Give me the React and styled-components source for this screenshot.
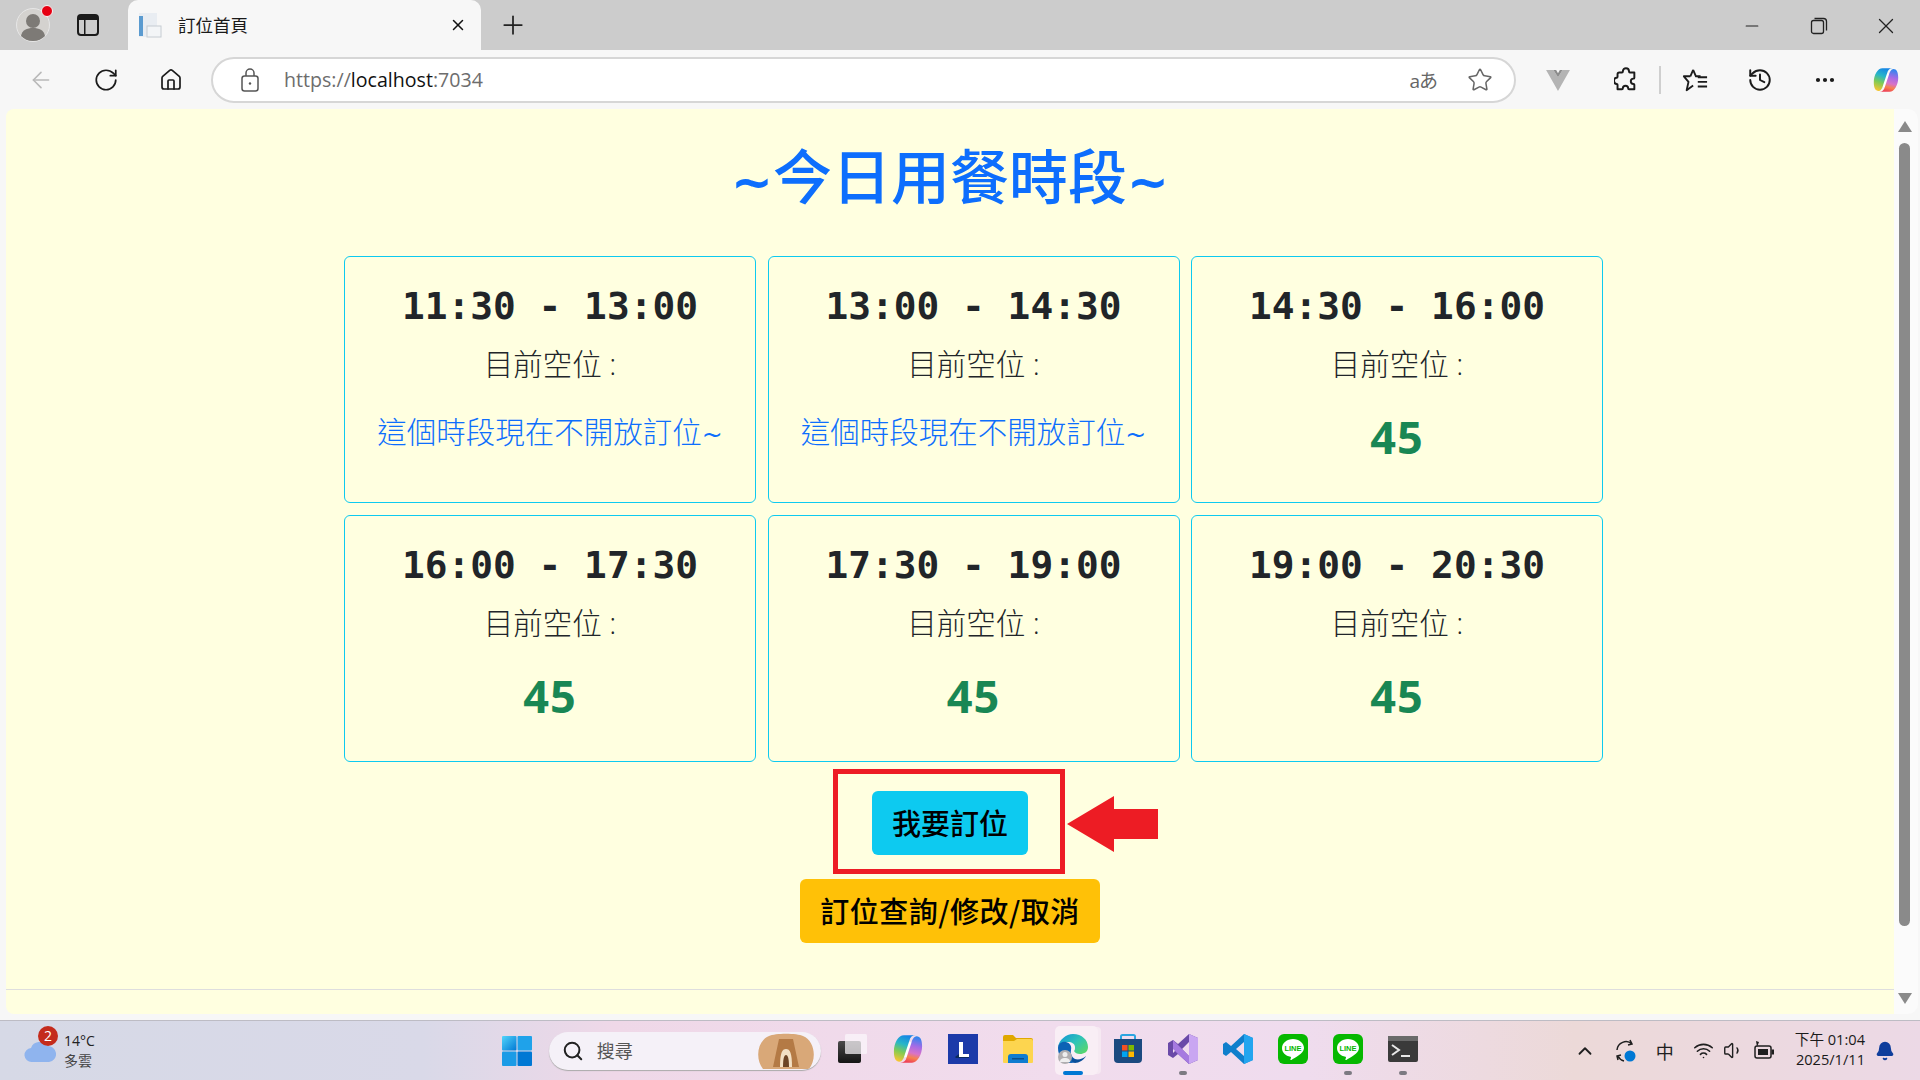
import React from 'react';
import styled, { createGlobalStyle } from 'styled-components';
import {
  ArrowLeft, RotateCw, Home, Star, MoreHorizontal, History, X, Plus, Minus,
  Search, ChevronUp, Wifi, Volume1, Bell,
} from 'lucide-react';

const GlobalStyle = createGlobalStyle`
html, body {
  margin: 0;
  padding: 0;
  width: 1920px;
  height: 1080px;
  overflow: hidden;
  font-family: "Open Sans", "Noto Sans CJK TC", sans-serif;
}
`;

const Screen = styled.div`
  width: 1920px;
  height: 1080px;
  display: flex;
  flex-direction: column;
  background: #f7f7f7;
`;

/* ---- browser chrome ---- */
const TabStrip = styled.div`
  height: 50px;
  background: #cccccc;
  display: flex;
  align-items: center;
  flex-shrink: 0;
`;
const Avatar = styled.div`
  position: relative;
  width: 34px;
  height: 34px;
  margin-left: 16px;
  flex-shrink: 0;
`;
const RedDot = styled.span`
  position: absolute;
  top: -3px;
  right: -3px;
  width: 10px;
  height: 10px;
  border-radius: 50%;
  background: #e60012;
  border: 1.5px solid #f5f5f5;
`;
const TabsButton = styled.div`
  width: 22px;
  height: 22px;
  margin-left: 27px;
  flex-shrink: 0;
`;
const Tab = styled.div`
  width: 353px;
  height: 50px;
  margin-left: 29px;
  padding: 0 14px 0 10px;
  box-sizing: border-box;
  display: flex;
  align-items: center;
  background: #f7f7f7;
  border-radius: 10px 10px 0 0;
`;
const TabTitle = styled.span`
  flex: 1;
  margin-left: 16px;
  padding-bottom: 2px;
  font-size: 17.5px;
  color: #1a1a1a;
`;
const NewTab = styled.div`
  margin-left: 17px;
  display: flex;
  color: #222;
`;
const WindowButtons = styled.div`
  margin-left: auto;
  display: flex;
  align-items: center;
  padding-right: 1px;
  padding-top: 2px;
  color: #222;
`;
const WindowSlot = styled.div`
  width: 67px;
  display: flex;
  justify-content: center;
`;

const Toolbar = styled.div`
  height: 59px;
  background: #f7f7f7;
  display: flex;
  align-items: center;
  flex-shrink: 0;
`;
const ToolIcon = styled.div`
  width: ${p => p.$w || 26}px;
  margin-left: ${p => p.$ml || 0}px;
  display: flex;
  justify-content: center;
  align-items: center;
  color: ${p => p.$color || '#1b1b1b'};
  flex-shrink: 0;
`;
const AddressBar = styled.div`
  width: 1305px;
  height: 46px;
  margin-left: 27px;
  box-sizing: border-box;
  border: 2px solid #d6d6d6;
  border-radius: 23px;
  background: #fff;
  display: flex;
  align-items: center;
  flex-shrink: 0;
`;
const UrlText = styled.span`
  margin-left: 22px;
  font-size: 19.6px;
  color: #6d6d6d;
  b {
    font-weight: 400;
    color: #111;
  }
`;
const Translate = styled.span`
  margin-left: auto;
  font-size: 19px;
  color: #666;
  letter-spacing: -1px;
`;
const Divider = styled.span`
  width: 2px;
  height: 28px;
  margin-left: 21px;
  background: #cfcfcf;
  flex-shrink: 0;
`;

/* ---- page ---- */
const Body = styled.div`
  flex: 1;
  display: flex;
  min-height: 0;
  padding: 0 2px 6px 6px;
`;
const Viewport = styled.div`
  flex: 1;
  background: #ffffe0;
  border-radius: 8px 0 0 8px;
  display: flex;
  flex-direction: column;
  align-items: center;
  min-width: 0;
`;
const Title = styled.h1`
  margin: 27px 0 0;
  height: 120px;
  font-size: 59px;
  line-height: 76px;
  font-weight: 500;
  color: #0d6efd;
  font-family: "Noto Sans CJK TC", sans-serif;
`;
const Tilde = styled.span`
  font-family: "DejaVu Sans", sans-serif;
  font-weight: ${p => p.$bold ? 700 : 400};
  font-size: ${p => p.$size}px;
`;
const SlotGrid = styled.div`
  align-self: flex-start;
  margin-left: 338px;
  width: 1259px;
  display: grid;
  grid-template-columns: repeat(3, 412px);
  grid-auto-rows: 247px;
  gap: 12px 11.5px;
`;
const SlotCard = styled.div`
  box-sizing: border-box;
  border: 1px solid #0dcaf0;
  border-radius: 6px;
  display: flex;
  flex-direction: column;
  align-items: center;
`;
const SlotTime = styled.div`
  margin-top: 25px;
  height: 48px;
  line-height: 48px;
  font-family: "DejaVu Sans Mono", monospace;
  font-weight: 700;
  font-size: 37.8px;
  color: #212529;
`;
const SlotLabel = styled.div`
  margin-top: 10px;
  height: 48px;
  line-height: 48px;
  font-size: 29.5px;
  font-weight: 300;
  color: #212529;
`;
const Closed = styled.div`
  margin-top: 20px;
  height: 48px;
  line-height: 48px;
  font-size: 29.5px;
  font-weight: 300;
  color: #0d6efd;
`;
const Seats = styled.div`
  margin-top: 25px;
  height: 48px;
  line-height: 48px;
  font-size: 45px;
  font-weight: 700;
  letter-spacing: 1px;
  color: #198754;
`;
const Actions = styled.div`
  position: relative;
  margin-top: 29px;
  display: flex;
  flex-direction: column;
  align-items: center;
  gap: 24px;
`;
const ActionButton = styled.button`
  height: 64px;
  padding: 0 20px 3px;
  border: none;
  border-radius: 6px;
  background: ${p => p.$bg};
  color: #000;
  font-size: 29px;
  font-weight: 500;
  letter-spacing: ${p => p.$spread ? '0.5px' : '0'};
  font-family: "Noto Sans CJK TC", sans-serif;
`;
const RedFrame = styled.div`
  position: absolute;
  top: -22px;
  left: 33px;
  width: 232px;
  height: 105px;
  box-sizing: border-box;
  border: 5px solid #ed1c24;
`;
const RedArrow = styled.svg`
  position: absolute;
  top: 5px;
  left: 267px;
`;
const HRule = styled.div`
  align-self: stretch;
  height: 1px;
  margin-top: 46px;
  background: #dedede;
`;
const ScrollTrack = styled.div`
  width: 24px;
  background: #fbfbfb;
  border-radius: 0 10px 10px 0;
  display: flex;
  flex-direction: column;
  align-items: center;
  padding: 12px 3px 10px 0;
  box-sizing: border-box;
`;
const ScrollArrow = styled.div`
  width: 0;
  height: 0;
  border-left: 7px solid transparent;
  border-right: 7px solid transparent;
  ${p => p.$down ? 'border-top: 11px solid #8a8a8a;' : 'border-bottom: 11px solid #8a8a8a;'}
`;
const ScrollThumb = styled.div`
  width: 11px;
  height: 783px;
  margin-top: 11px;
  background: #8a8a8a;
  border-radius: 6px;
  margin-bottom: auto;
`;

/* ---- taskbar ---- */
const Taskbar = styled.div`
  height: 60px;
  flex-shrink: 0;
  box-sizing: border-box;
  border-top: 1px solid #bdbcc4;
  background: linear-gradient(90deg, #d6d9e6 0%, #d9d9e8 22%, #efd8e8 32%, #f1dced 55%, #efdcee 68%, #ecd9d8 82%, #ecd9e6 100%);
  display: flex;
  align-items: center;
  position: relative;
`;
const Weather = styled.div`
  position: relative;
  width: 30px;
  height: 24px;
  margin-left: 24px;
  flex-shrink: 0;
`;
const Badge = styled.span`
  position: absolute;
  top: -13px;
  left: 14px;
  width: 20px;
  height: 20px;
  border-radius: 50%;
  background: #c42b1c;
  color: #fff;
  font-size: 14px;
  line-height: 20px;
  text-align: center;
`;
const WeatherText = styled.div`
  margin-left: 10px;
  font-size: 14px;
  line-height: 20px;
  color: #222;
  flex-shrink: 0;
  span {
    display: block;
    color: #444;
  }
`;
const StartIcon = styled.div`
  margin-left: 407px;
  width: 30px;
  height: 30px;
  flex-shrink: 0;
`;
const SearchBox = styled.div`
  width: 272px;
  height: 38px;
  margin-left: 17px;
  box-sizing: border-box;
  background: #f5f1f8;
  border-radius: 19px;
  box-shadow: 0 1px 1px #aaa;
  display: flex;
  align-items: center;
  padding-left: 13px;
  color: #555;
  font-size: 18px;
  flex-shrink: 0;
  position: relative;
  overflow: hidden;
`;
const SearchLabel = styled.span`
  margin-left: 13px;
  padding-bottom: 2px;
`;
const SearchArt = styled.svg`
  position: absolute;
  right: 4px;
  top: 1px;
`;
const AppRow = styled.div`
  display: flex;
  margin-left: 5px;
  flex-shrink: 0;
`;
const AppSlot = styled.div`
  position: relative;
  width: 55px;
  height: 50px;
  display: flex;
  align-items: center;
  justify-content: center;
  ${p => p.$active && `
    &::before {
      content: '';
      position: absolute;
      left: 9px;
      top: 0;
      width: 43px;
      height: 49px;
      background: #f9eef5;
      border-radius: 5px;
      box-shadow: 4px 0 0 -1px #f6e9f2;
    }
  `}
`;
const AppIcon = styled.div`
  position: relative;
  width: 30px;
  height: 30px;
  margin-top: -4px;
`;
const RunDot = styled.span`
  position: absolute;
  bottom: 1px;
  left: 50%;
  transform: translateX(-50%);
  width: ${p => p.$on ? 20 : 8}px;
  height: 4px;
  border-radius: 2px;
  background: ${p => p.$on ? '#0078d4' : '#7c7a82'};
`;
const Tray = styled.div`
  margin-left: auto;
  display: flex;
  align-items: center;
  color: #1f1f1f;
  flex-shrink: 0;
  padding-right: 20px;
`;
const TrayItem = styled.div`
  width: ${p => p.$w || 30}px;
  margin-left: ${p => p.$ml || 0}px;
  display: flex;
  justify-content: center;
  font-size: 18px;
`;
const Clock = styled.div`
  margin-left: 16px;
  padding-bottom: 4px;
  text-align: right;
  font-size: 14.6px;
  line-height: 20px;
  color: #1a1a1a;
  white-space: nowrap;
`;

const CopilotIcon = ({ size = 30, id }) => (
  <svg width={size} height={size} viewBox="0 0 33 32">
    <defs>
      <linearGradient id={`${id}A`} x1="0.6" y1="0" x2="0.3" y2="1">
        <stop offset="0" stopColor="#1584e6" />
        <stop offset="0.35" stopColor="#27b6c8" />
        <stop offset="0.65" stopColor="#7fcb55" />
        <stop offset="1" stopColor="#f6c532" />
      </linearGradient>
      <linearGradient id={`${id}B`} x1="0.6" y1="0" x2="0.4" y2="1">
        <stop offset="0" stopColor="#2f86ee" />
        <stop offset="0.35" stopColor="#a56be6" />
        <stop offset="0.62" stopColor="#d873c8" />
        <stop offset="0.8" stopColor="#f7824e" />
        <stop offset="1" stopColor="#ee3f56" />
      </linearGradient>
    </defs>
    <path d="M17 8h6l-6 17h-6z" fill="#fff" />
    <path d="M12 1h13c-4 0-6 2-7 6l-5 15c-1 4-3 8-6 8-4 0-6-4-6-11C1 9 6 1 12 1z" fill={`url(#${id}A)`} />
    <path d="M21 31H8c4 0 6-2 7-6l5-15c1-4 3-8 6-8 4 0 6 4 6 11 0 9-5 18-11 18z" fill={`url(#${id}B)`} />
  </svg>
);

const LineIcon = () => (
  <svg width="30" height="30" viewBox="0 0 30 30">
    <rect width="30" height="30" rx="6" fill="#06b800" />
    <path d="M15 5c-6 0-11 4-11 9 0 4.500 3.500 8 8.500 8.800.8.200.6 1-.1 2.700-.2.600.3.800 1 .4 3-1.800 12.600-6.500 12.600-11.900 0-5-5-9-11-9z" fill="#fff" />
    <text x="15" y="17" textAnchor="middle" fontSize="7.500" fontWeight="700" fill="#06b800" fontFamily="Liberation Sans, sans-serif">LINE</text>
  </svg>
);

const slots = [
  { time: '11:30 - 13:00', closed: true },
  { time: '13:00 - 14:30', closed: true },
  { time: '14:30 - 16:00', seats: 45 },
  { time: '16:00 - 17:30', seats: 45 },
  { time: '17:30 - 19:00', seats: 45 },
  { time: '19:00 - 20:30', seats: 45 },
];

const apps = [
  {
    key: 'taskview',
    icon: (
      <svg width="30" height="30" viewBox="0 0 30 30">
        <defs>
          <linearGradient id="tvA" x1="0" y1="0" x2="0" y2="1">
            <stop offset="0" stopColor="#4a4a4a" />
            <stop offset="1" stopColor="#141414" />
          </linearGradient>
        </defs>
        <rect x="0" y="7" width="23" height="22" rx="2" fill="url(#tvA)" />
        <rect x="7" y="0" width="22" height="20" rx="1.500" fill="#fbf7fb" fillOpacity="0.72" />
      </svg>
    ),
  },
  { key: 'copilot', icon: <CopilotIcon id="cpBar" /> },
  {
    key: 'l',
    icon: (
      <svg width="30" height="30" viewBox="0 0 30 30">
        <rect width="30" height="30" fill="#1c3aa9" />
        <path d="M7 23l4-3V9h4v11h6v4H8z" fill="#0b2a5c" />
        <path d="M11 8h4v12h6v3H11z" fill="#fff" />
      </svg>
    ),
  },
  {
    key: 'folder',
    icon: (
      <svg width="30" height="30" viewBox="0 0 30 30">
        <path d="M0 3a2 2 0 0 1 2-2h8l3 3h15a2 2 0 0 1 2 2v4H0z" fill="#e0a800" />
        <path d="M0 7h11l3-2h14a2 2 0 0 1 2 2v21a1 1 0 0 1-1 1H1a1 1 0 0 1-1-1z" fill="#fdd54f" />
        <path d="M5 29v-6a3 3 0 0 1 3-3h14a3 3 0 0 1 3 3v6z" fill="#0f7cd0" />
        <rect x="9" y="24" width="12" height="1.500" fill="#0a4f8c" />
      </svg>
    ),
  },
  {
    key: 'edge',
    active: true,
    running: 'on',
    icon: (
      <svg width="30" height="30" viewBox="0 0 30 30">
        <defs>
          <linearGradient id="edgeA" x1="0" y1="0" x2="1" y2="0.8">
            <stop offset="0" stopColor="#0f8fd8" />
            <stop offset="0.55" stopColor="#2fc4b8" />
            <stop offset="1" stopColor="#58d66c" />
          </linearGradient>
        </defs>
        <path d="M0 13C1 6 8 0 15 0c9 0 15 6 15 13 0 5-4 7-8 7-3 0-5-1-6-3 1-1 1-2 1-4 0-3-3-5-7-5-4 0-9 2-10 5z" fill="url(#edgeA)" />
        <path d="M0 14c0-4 4-7 8-6 4 1 6 4 5 8-1 5 2 9 7 10-2 2-4 3-7 3C5 29 0 22 0 14z" fill="#0c62b5" />
        <path d="M13 23c4 4 11 3 15-1-2 4-7 7-11 7-2 0-4-3-4-6z" fill="#0a4f9a" />
        <circle cx="7" cy="23" r="7" fill="#b0aeb0" />
        <circle cx="7" cy="20.500" r="2.500" fill="#eeeeee" />
        <path d="M2 28c0-3 2-4 5-4s5 1 5 4z" fill="#eeeeee" />
      </svg>
    ),
  },
  {
    key: 'store',
    icon: (
      <svg width="30" height="30" viewBox="0 0 30 30">
        <path d="M8 6V2.500a1.500 1.500 0 0 1 1.500-1.500h11a1.500 1.500 0 0 1 1.500 1.500V6" fill="none" stroke="#2ba4e0" strokeWidth="2" />
        <path d="M1 5h28v20a4 4 0 0 1-4 4H5a4 4 0 0 1-4-4z" fill="#1b4a80" />
        <rect x="9" y="11" width="5.500" height="5.500" fill="#f25022" />
        <rect x="15.500" y="11" width="5.500" height="5.500" fill="#7fba00" />
        <rect x="9" y="17.500" width="5.500" height="5.500" fill="#00a4ef" />
        <rect x="15.500" y="17.500" width="5.500" height="5.500" fill="#ffb900" />
      </svg>
    ),
  },
  {
    key: 'vs',
    running: 'dot',
    icon: (
      <svg width="30" height="30" viewBox="0 0 30 30">
        <path fillRule="evenodd" d="M21 0L10 10 5 6 0 9v12l5 3 5-4 11 10 9-4V4zM5 11l4 4-4 4zM21 8v14l-7-7z" fill="#6a4aa8" />
        <path d="M5 6l16 16v8L10 20 5 15z" fill="#a67ae0" />
        <path d="M21 0l9 4v22l-9 4v-8l0-14z" fill="#c9a6f2" />
      </svg>
    ),
  },
  {
    key: 'vscode',
    icon: (
      <svg width="30" height="30" viewBox="0 0 30 30">
        <path fillRule="evenodd" d="M21 0L8 12 3 8 0 10v10l3 2 5-4 13 12 9-4V4zM21 8v14l-8-7z" fill="#0f7fcc" />
        <path d="M21 0l9 4v22l-9 4v-8l0-14z" fill="#23a5ef" />
      </svg>
    ),
  },
  { key: 'line1', icon: <LineIcon /> },
  { key: 'line2', running: 'dot', icon: <LineIcon /> },
  {
    key: 'terminal',
    running: 'dot',
    icon: (
      <svg width="30" height="30" viewBox="0 0 30 30">
        <rect y="2" width="30" height="26" rx="2" fill="#3a3a3a" />
        <rect y="2" width="30" height="5" fill="#6a6a6a" />
        <path d="M4 11l7 5-7 5" fill="none" stroke="#e8e8e8" strokeWidth="2" />
        <rect x="13" y="21" width="9" height="2" fill="#e8e8e8" />
      </svg>
    ),
  },
];

const App = () => (
  <Screen>
    <GlobalStyle />
    <TabStrip>
      <Avatar>
        <svg width="34" height="34" viewBox="0 0 34 34">
          <circle cx="17" cy="17" r="16.500" fill="#d4d2cf" stroke="#e6e6e6" />
          <circle cx="17" cy="13" r="7" fill="#7d7a76" />
          <path d="M5 28c1-6 6-8 12-8s11 2 12 8c-3 3-7 5-12 5s-9-2-12-5z" fill="#7d7a76" />
        </svg>
        <RedDot />
      </Avatar>
      <TabsButton>
        <svg width="22" height="22" viewBox="0 0 22 22">
          <rect x="1" y="1" width="20" height="20" rx="3" fill="none" stroke="#1a1a1a" strokeWidth="2" />
          <rect x="1" y="1" width="20" height="5" fill="#1a1a1a" />
          <rect x="7" y="5" width="1.500" height="15" fill="#1a1a1a" />
        </svg>
      </TabsButton>
      <Tab>
        <svg width="24" height="26" viewBox="0 0 24 26">
          <rect x="1" y="1" width="18" height="24" fill="#e9edf2" />
          <rect x="1" y="4" width="4" height="20" fill="#5b9bd0" />
          <rect x="9" y="14" width="14" height="11" fill="#f3f5f7" stroke="#c6ccd2" />
        </svg>
        <TabTitle>訂位首頁</TabTitle>
        <X size={18} strokeWidth={2} color="#111" />
      </Tab>
      <NewTab><Plus size={30} strokeWidth={1.4} /></NewTab>
      <WindowButtons>
        <WindowSlot><Minus size={20} strokeWidth={1.3} /></WindowSlot>
        <WindowSlot>
          <svg width="18" height="18" viewBox="0 0 18 18" fill="none" stroke="#222" strokeWidth="1.300">
            <rect x="1.500" y="3.500" width="12" height="13" rx="2" />
            <path d="M4.500 1.500h9a3 3 0 0 1 3 3v9" />
          </svg>
        </WindowSlot>
        <WindowSlot><X size={26} strokeWidth={1.2} /></WindowSlot>
      </WindowButtons>
    </TabStrip>
    <Toolbar>
      <ToolIcon $ml={28} $color="#b9b9b9"><ArrowLeft size={26} strokeWidth={1.5} /></ToolIcon>
      <ToolIcon $ml={39}><RotateCw size={26} strokeWidth={1.6} /></ToolIcon>
      <ToolIcon $ml={39}><Home size={24} strokeWidth={1.7} /></ToolIcon>
      <AddressBar>
        <ToolIcon $w={24} $ml={25} $color="#555">
          <svg width="18" height="24" viewBox="0 0 18 24" fill="none" stroke="#555" strokeWidth="1.500">
            <rect x="1" y="8" width="16" height="15" rx="2.500" />
            <path d="M5 8V5a4 4 0 0 1 8 0v3" />
            <circle cx="9" cy="15.500" r="1.200" fill="#555" stroke="none" />
          </svg>
        </ToolIcon>
        <UrlText>https://<b>localhost</b>:7034</UrlText>
        <Translate>aあ</Translate>
        <ToolIcon $ml={30} $color="#666"><Star size={26} strokeWidth={1.4} /></ToolIcon>
        <ToolIcon $ml={0} $w={21} />
      </AddressBar>
      <ToolIcon $ml={29}>
        <svg width="24" height="22" viewBox="0 0 26 24">
          <path d="M0 1h8l5 8 5-8h8L13 24z" fill="#b4b4b4" />
          <path d="M8 1l5 8 5-8h-3l-2 3.500L11 1z" fill="#8c8c8c" />
        </svg>
      </ToolIcon>
      <ToolIcon $ml={41}>
        <svg width="23" height="25" viewBox="0 0 26 28" fill="none" stroke="#1b1b1b" strokeWidth="2.200" strokeLinejoin="round">
          <path d="M10 5c0-5 7-5 7 0 0 1 0 1 1 1h5v6c0 1 0 1-1 1-4 0-4 6 0 6 1 0 1 0 1 1v5h-6c-1 0-1 0-1-1 0-4-6-4-6 0 0 1 0 1-1 1H4v-5c0-1 0-1-1-1-4 0-4-7 0-7 1 0 1 0 1-1V8c0-1 1-2 2-2h3c1 0 1 0 1-1z" />
        </svg>
      </ToolIcon>
      <Divider />
      <ToolIcon $ml={21}>
        <svg width="26" height="26" viewBox="0 0 28 28" fill="none" stroke="#1b1b1b" strokeWidth="2" strokeLinejoin="round">
          <path d="M12 3l3 7h5M9 10l3-7M9 10H2l5 6-2 9 7-5" />
          <path d="M17 11h10M17 16h10M17 21h10" />
        </svg>
      </ToolIcon>
      <ToolIcon $ml={39}><History size={28} strokeWidth={1.8} /></ToolIcon>
      <ToolIcon $ml={39}><MoreHorizontal size={24} strokeWidth={2.2} /></ToolIcon>
      <ToolIcon $ml={35}><CopilotIcon size={34} id="cpTool" /></ToolIcon>
    </Toolbar>
    <Body>
      <Viewport>
        <Title><Tilde $bold $size={50}>~</Tilde>今日用餐時段<Tilde $bold $size={50}>~</Tilde></Title>
        <SlotGrid>
          {slots.map(slot => (
            <SlotCard key={slot.time}>
              <SlotTime>{slot.time}</SlotTime>
              <SlotLabel>目前空位 :</SlotLabel>
              {slot.closed
                ? <Closed>這個時段現在不開放訂位<Tilde $size={25}>~</Tilde></Closed>
                : <Seats>{slot.seats}</Seats>}
            </SlotCard>
          ))}
        </SlotGrid>
        <Actions>
          <ActionButton $bg="#0dcaf0">我要訂位</ActionButton>
          <ActionButton $bg="#ffc107" $spread>訂位查詢/修改/取消</ActionButton>
          <RedFrame />
          <RedArrow width="91" height="56" viewBox="0 0 91 56">
            <path d="M0 28L47 0v13h44v30H47v13z" fill="#ed1c24" />
          </RedArrow>
        </Actions>
        <HRule />
      </Viewport>
      <ScrollTrack>
        <ScrollArrow />
        <ScrollThumb />
        <ScrollArrow $down />
      </ScrollTrack>
    </Body>
    <Taskbar>
      <Weather>
        <svg width="32" height="24" viewBox="0 0 32 24">
          <path d="M8 23a7 7 0 0 1-1-14 9 9 0 0 1 16-2 8 8 0 0 1 2 16z" fill="#8fb4ee" />
        </svg>
        <Badge>2</Badge>
      </Weather>
      <WeatherText>14°C<span>多雲</span></WeatherText>
      <StartIcon>
        <svg width="30" height="30" viewBox="0 0 30 30">
          <defs>
            <linearGradient id="winA" x1="0" y1="0" x2="1" y2="1">
              <stop offset="0" stopColor="#52d5fb" />
              <stop offset="1" stopColor="#0078d4" />
            </linearGradient>
          </defs>
          <rect x="0" y="0" width="14.500" height="14.500" rx="1" fill="url(#winA)" />
          <rect x="15.500" y="0" width="14.500" height="14.500" rx="1" fill="#1fa2ea" />
          <rect x="0" y="15.500" width="14.500" height="14.500" rx="1" fill="#1b9be6" />
          <rect x="15.500" y="15.500" width="14.500" height="14.500" rx="1" fill="#0078d4" />
        </svg>
      </StartIcon>
      <SearchBox>
        <Search size={22} strokeWidth={2.2} color="#222" />
        <SearchLabel>搜尋</SearchLabel>
        <SearchArt width="62" height="36" viewBox="0 0 62 36">
          <path d="M8 36C0 26 2 8 14 3c6-3 28-3 34 0 12 5 14 23 6 33z" fill="#d9a878" />
          <path d="M18 34L24 6h14l6 28z" fill="#b47a45" />
          <path d="M25 34c0-14 2-18 6-18s6 4 6 18z" fill="#f3e0c4" />
          <path d="M28 34c0-8 1-12 3-12s3 4 3 12z" fill="#6d4526" />
        </SearchArt>
      </SearchBox>
      <AppRow>
        {apps.map(app => (
          <AppSlot key={app.key} $active={app.active}>
            <AppIcon>{app.icon}</AppIcon>
            {app.running && <RunDot $on={app.running === 'on'} />}
          </AppSlot>
        ))}
      </AppRow>
      <Tray>
        <TrayItem><ChevronUp size={22} strokeWidth={2} /></TrayItem>
        <TrayItem $ml={11}>
          <svg width="22" height="26" viewBox="0 0 22 26" fill="none" stroke="#1f1f1f" strokeWidth="1.500">
            <path d="M2 12a9 9 0 0 1 15-6M15 2l2 4-4 1M3 22l-1-4 4-1M3 18a9 9 0 0 0 6 5" />
            <circle cx="15" cy="18" r="5.500" fill="#0078d4" stroke="none" />
          </svg>
        </TrayItem>
        <TrayItem $ml={9}>中</TrayItem>
        <TrayItem $ml={9}><Wifi size={21} strokeWidth={1.8} /></TrayItem>
        <TrayItem $w={24} $ml={3}><Volume1 size={21} strokeWidth={1.6} /></TrayItem>
        <TrayItem $ml={3}>
          <svg width="22" height="20" viewBox="0 0 22 20">
            <rect x="2" y="5" width="16" height="12" rx="2" fill="none" stroke="#1f1f1f" strokeWidth="1.500" />
            <rect x="5" y="8" width="10" height="6" fill="#1f1f1f" />
            <rect x="18.500" y="8.500" width="2.500" height="5" fill="#1f1f1f" />
            <path d="M3 0l3 1-2 5z" fill="#1f1f1f" />
          </svg>
        </TrayItem>
        <Clock>下午 01:04<br />2025/1/11</Clock>
        <TrayItem $ml={5}><Bell size={20} fill="#0f3e9c" color="#0f3e9c" /></TrayItem>
      </Tray>
    </Taskbar>
  </Screen>
);

export default App;
